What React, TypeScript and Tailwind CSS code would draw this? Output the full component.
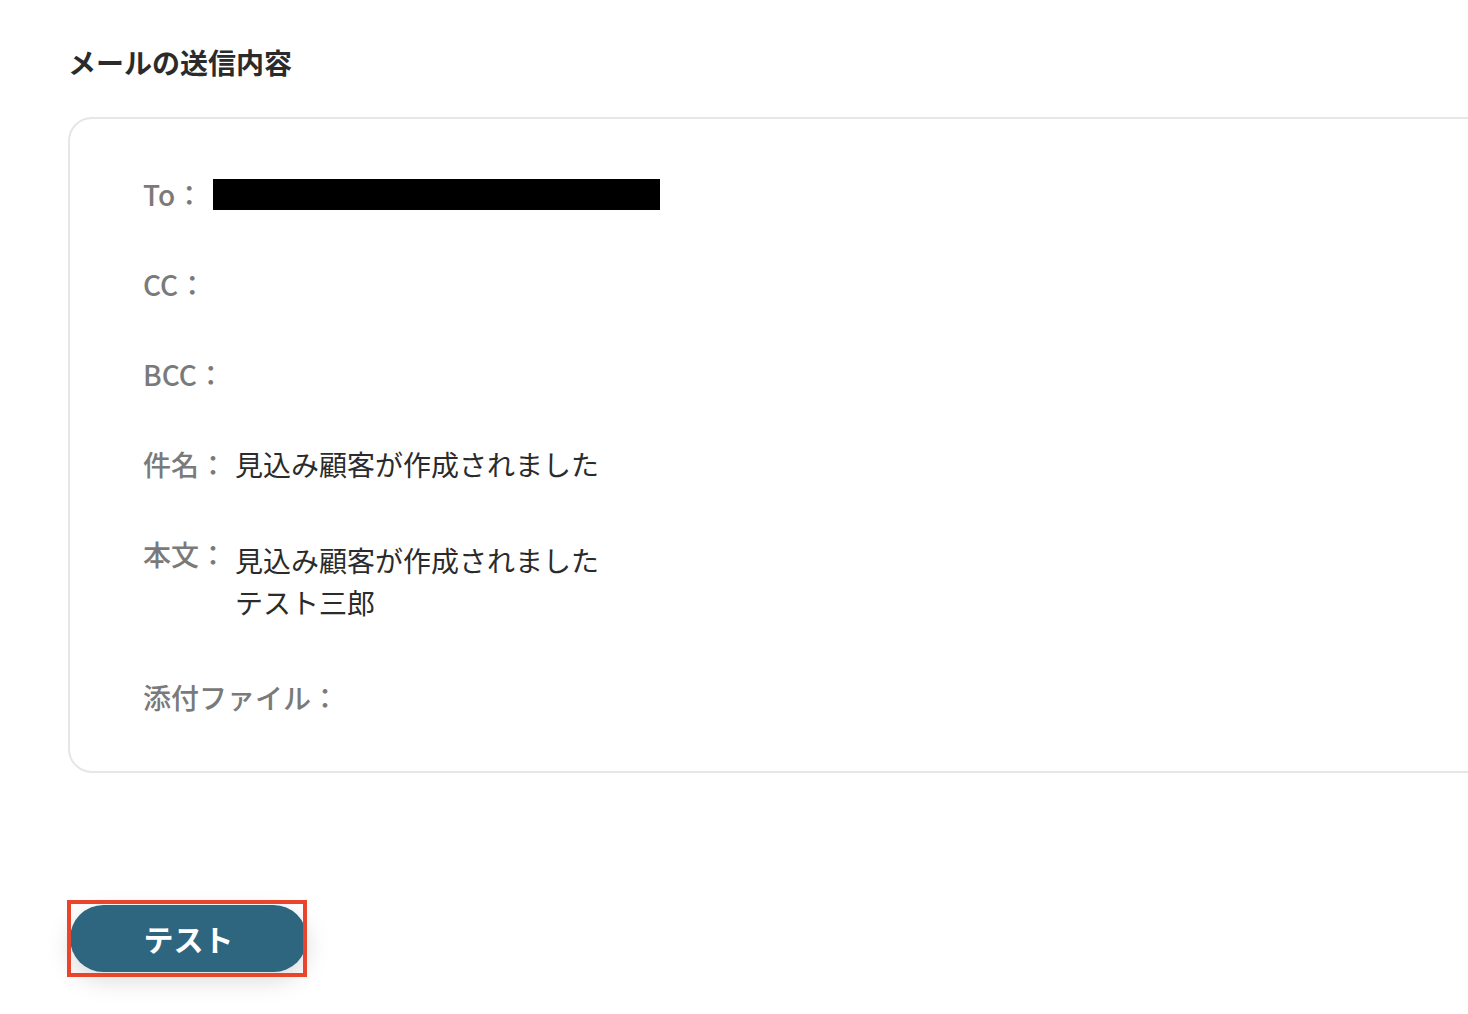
const font = { fontFamily: '"Noto Sans CJK JP", "Noto Sans", sans-serif' };

function Row({ label, children, top = false }: { label: string; children?: React.ReactNode; top?: boolean }) {
  return (
    <div className={`flex ${top ? 'items-start' : 'items-center'} gap-2 text-[28px] leading-[42px]`}>
      <span className="text-[#7a7a7a] font-medium whitespace-nowrap">{label}</span>
      {children}
    </div>
  );
}

export default function App() {
  return (
    <main className="w-[1468px] h-[1014px] overflow-hidden bg-white text-[#333]" style={font}>
      <div className="pl-[68px] pt-[43px]">
        <h2 className="text-[28px] leading-[38px] font-bold text-[#2b2b2b]">メールの送信内容</h2>

        <div className="mt-[36px] w-[1460px] h-[656px] border-2 border-[#e6e6e6] rounded-[24px] pl-[73px] pt-[54px] flex flex-col gap-[48px]">
          <Row label="To：">
            <div className="ml-[2px] w-[447px] h-[31px] bg-black" />
          </Row>
          <Row label="CC：" />
          <Row label="BCC：" />
          <Row label="件名：">
            <span className="text-[#2b2b2b]">見込み顧客が作成されました</span>
          </Row>
          <Row label="本文：" top>
            <div className="pt-[6px] pb-[5px] text-[#2b2b2b]">
              <p>見込み顧客が作成されました</p>
              <p>テスト三郎</p>
            </div>
          </Row>
          <Row label="添付ファイル：" />
        </div>

        <div className="relative mt-[127px] w-[240px] h-[77px] -ml-[1px]">
          <button className="absolute left-[3px] top-[5px] w-[237px] h-[67px] rounded-full bg-[#2e6680] text-white text-[30px] font-bold shadow-[0_8px_24px_rgba(0,0,0,0.15)]">
            テスト
          </button>
          <div className="absolute inset-0 border-[4px] border-[#e8452c] pointer-events-none" />
        </div>
      </div>
    </main>
  );
}
